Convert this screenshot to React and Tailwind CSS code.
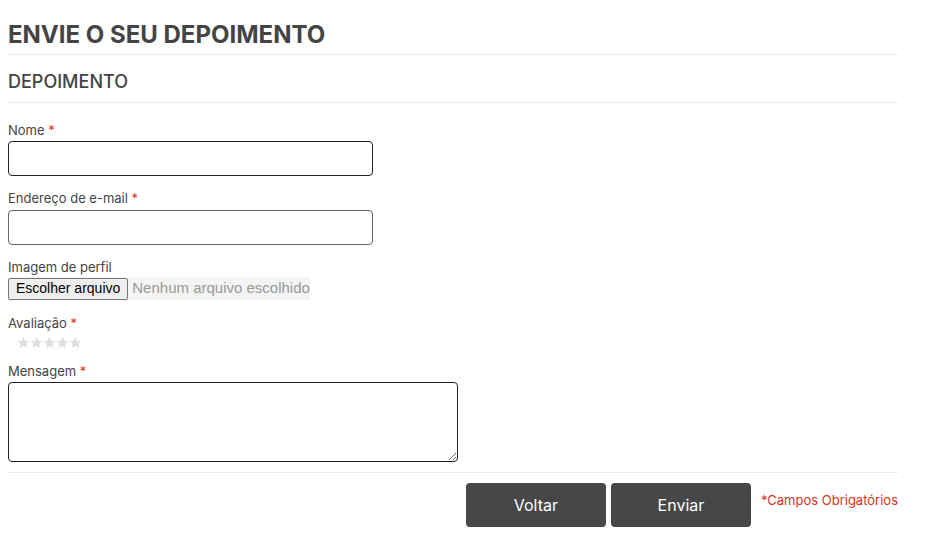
function Star() {
  return (
    <svg width="13" height="13" viewBox="0 0 24 24" fill="#dedede">
      <polygon points="12,1.5 15,8.9 23,9.3 16.8,14.4 18.9,22.3 12,17.8 5.1,22.3 7.2,14.4 1,9.3 9,8.9" />
    </svg>
  );
}

export default function App() {
  const font = { fontFamily: 'Inter, "Noto Sans", sans-serif' };

  return (
    <div className="w-[926px] h-[560px] bg-white px-2 text-[#444]" style={font}>
      <div className="w-[890px]">
        <h1 className="pt-[20px] pb-[4px] text-[24px] font-bold leading-[30px] border-b border-[#ebebeb]">
          ENVIE O SEU DEPOIMENTO
        </h1>
        <h2 className="pt-[14px] pb-[8px] text-[18px] font-medium leading-[25px] border-b border-[#ebebeb]">
          DEPOIMENTO
        </h2>

        <form className="flex flex-col">
          <label className="mt-[19px] text-[13px] leading-[16px] text-[#444]">
            Nome <span className="text-[#e0301e]">*</span>
          </label>
          <input className="mt-[3px] w-[365px] h-[35px] rounded-[4px] border border-[#222] bg-white" />

          <label className="mt-[14px] text-[13px] leading-[16px] text-[#444]">
            Endereço de e-mail <span className="text-[#e0301e]">*</span>
          </label>
          <input className="mt-[4px] w-[365px] h-[35px] rounded-[4px] border border-[#666] bg-white" />

          <label className="mt-[14px] text-[13px] leading-[16px] text-[#444]">Imagem de perfil</label>
          <div
            className="mt-[2px] flex items-center w-[302px] h-[23px] bg-[#f4f4f4]"
            style={{ fontFamily: '"Liberation Sans", Arial, sans-serif' }}
          >
            <span className="h-[22px] px-[7px] flex items-center rounded-[2px] border border-[#767676] bg-[#efefef] text-[14px] text-black">
              Escolher arquivo
            </span>
            <span className="ml-[4px] text-[15px] text-[#999] whitespace-nowrap">Nenhum arquivo escolhido</span>
          </div>

          <label className="mt-[15px] text-[13px] leading-[16px] text-[#444]">
            Avaliação <span className="text-[#e0301e]">*</span>
          </label>
          <div className="mt-[5px] ml-[9px] flex">
            <Star />
            <Star />
            <Star />
            <Star />
            <Star />
          </div>

          <label className="mt-[14px] text-[13px] leading-[16px] text-[#444]">
            Mensagem <span className="text-[#e0301e]">*</span>
          </label>
          <textarea className="mt-[3px] w-[450px] h-[80px] rounded-[4px] border border-[#222] bg-white block" />

          <div className="mt-[10px] border-t border-[#ebebeb] pt-[10px] flex justify-end items-start">
            <button type="button" className="w-[140px] h-[44px] rounded-[4px] bg-[#474747] text-white text-[16px] font-normal">
              Voltar
            </button>
            <button type="button" className="ml-[5px] w-[140px] h-[44px] rounded-[4px] bg-[#474747] text-white text-[16px] font-normal">
              Enviar
            </button>
            <span className="ml-[10px] mt-[9px] text-[13px] leading-[16px] text-[#e0301e]">*Campos Obrigatórios</span>
          </div>
        </form>
      </div>
    </div>
  );
}
